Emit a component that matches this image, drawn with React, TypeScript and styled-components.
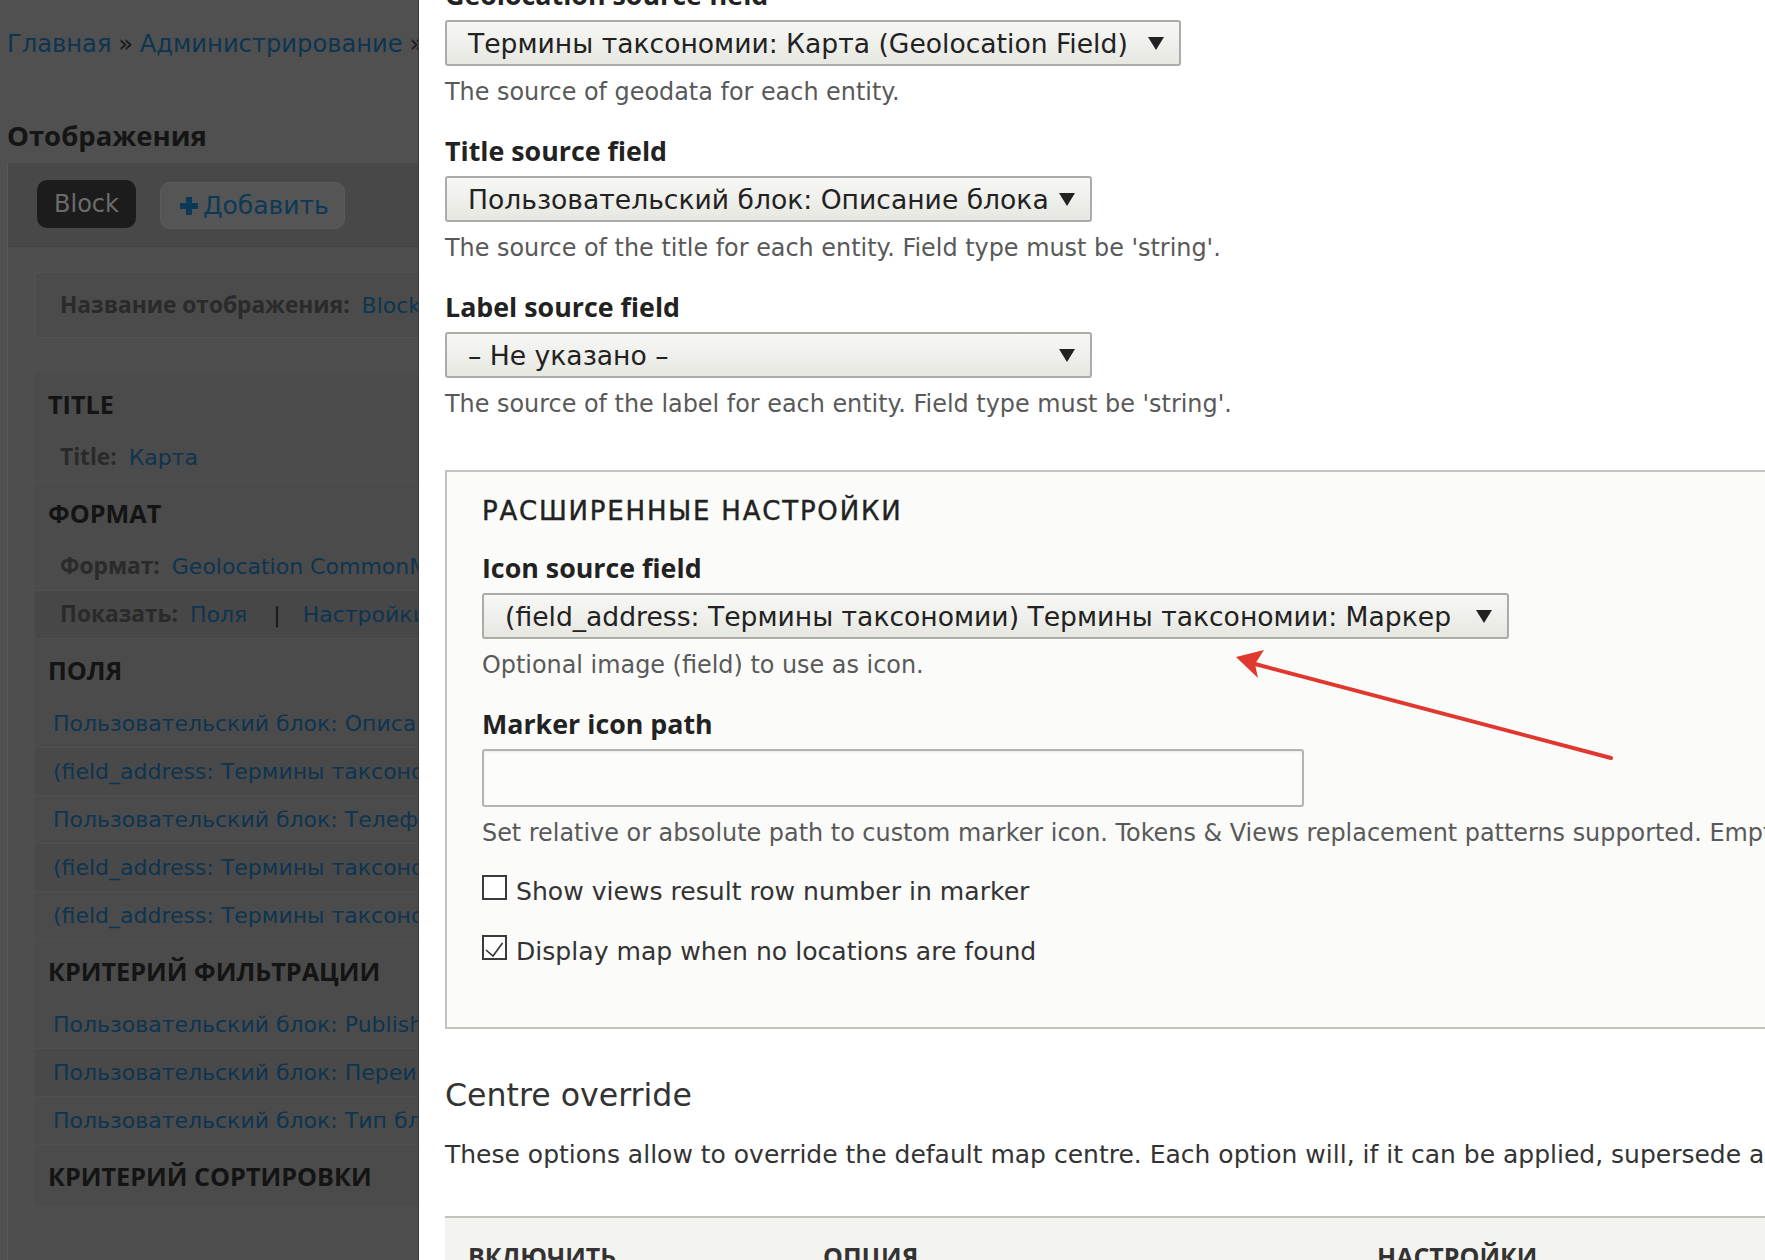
import React from "react";
import styled, { createGlobalStyle } from "styled-components";

const GlobalStyle = createGlobalStyle`
  html, body { margin: 0; padding: 0; }
  body {
    width: 1765px;
    height: 1260px;
    overflow: hidden;
    background: #a0a0a0;
    font-family: "DejaVu Sans", "Liberation Sans", sans-serif;
  }
  * { box-sizing: border-box; }
`;

const Viewport = styled.div`
  position: relative;
  width: 1765px;
  height: 1260px;
  overflow: hidden;
  background: #a0a0a0;
`;

/* ---------- admin page behind the modal ---------- */

const AdminPage = styled.div`
  padding: 28px 0 0 7px;
  white-space: nowrap;
`;

const Breadcrumb = styled.nav`
  font-size: 24.2px;
  line-height: 32px;
`;

const Crumb = styled.a`
  color: #1a6aa2;
  text-decoration: none;
`;

const CrumbSep = styled.span`
  color: #343434;
  margin: 0 0.28em;
`;

const PageTitle = styled.h1`
  margin: 59px 0 0;
  font: 700 27.5px/34px "Open Sans", sans-serif;
  color: #2a2a2a;
`;

const DisplayArea = styled.section`
  margin-top: 10px;
  width: 900px;
  height: 1200px;
  background: #9c9c9c;
  border-left: 1px solid #b4b4b4;
`;

const TabsBar = styled.div`
  display: flex;
  align-items: flex-start;
  gap: 24px;
  height: 84px;
  padding: 17px 0 0 29px;
  background: #909090;
  border-bottom: 1px solid #848484;
`;

const ActiveTab = styled.span`
  height: 48px;
  padding: 0 17px;
  border-radius: 10px;
  background: #383838;
  color: #d6d6d6;
  font-size: 24px;
  line-height: 48px;
`;

const AddTab = styled.span`
  display: flex;
  align-items: center;
  gap: 5px;
  margin-top: 2px;
  height: 47px;
  padding: 0 15px 0 19px;
  border-radius: 10px;
  border: 1px solid #b8b8b8;
  background: #aaaaaa;
  color: #1a72b0;
  font-size: 25px;
`;

const DisplayContent = styled.div`
  padding: 25px 0 0 27px;
`;

const NameBox = styled.div`
  width: 700px;
  height: 66px;
  padding-left: 24px;
  background: #969696;
  border: 1px solid #a4a4a4;
  line-height: 66px;
  font-size: 22px;
`;

const InlineLabel = styled.span`
  font: 700 22.7px "Open Sans", sans-serif;
  color: #545454;
  margin-right: 12px;
`;

const ValueLink = styled.a`
  color: #1a6aa2;
  text-decoration: none;
  font-size: 22px;
`;

const Pipe = styled.span`
  color: #2a2a2a;
  margin: 0 22px 0 26px;
  font-size: 22px;
`;

const ColumnBox = styled.div`
  width: 700px;
  margin-top: 35px;
  background: #969696;
`;

const SectionHeader = styled.div`
  height: 61px;
  padding-left: 13px;
  font: 700 25.2px/63px "Open Sans", sans-serif;
  color: #282828;
`;

const ItemRow = styled.div<{ $indent: number; $shade: "a" | "b" | "c" }>`
  height: 48px;
  padding-left: ${(p) => p.$indent}px;
  line-height: 47px;
  font-size: 22px;
  border-bottom: 1px solid #a0a0a0;
  background: ${(p) =>
    p.$shade === "a" ? "#969696" : p.$shade === "b" ? "#939393" : "#8e8e8e"};
`;

const Overlay = styled.div`
  position: absolute;
  inset: 0;
  background: rgba(0, 0, 0, 0.5);
`;

/* ---------- modal dialog ---------- */

const Dialog = styled.div`
  position: absolute;
  top: 0;
  left: 418px;
  right: 0;
  bottom: 0;
  background: #ffffff;
  border-left: 1px solid #3a3a3a;
  overflow: hidden;
`;

const DialogBody = styled.div`
  width: 1900px;
  margin-top: -21px;
  padding-left: 26px;
  white-space: nowrap;
`;

const FormItem = styled.div`
  margin-bottom: 27px;
`;

const FieldLabel = styled.label`
  display: block;
  margin-bottom: 9px;
  font: 700 26.8px/32px "Open Sans", sans-serif;
  color: #222222;
`;

const SelectBox = styled.div<{ $width: number }>`
  display: flex;
  align-items: center;
  justify-content: space-between;
  width: ${(p) => p.$width}px;
  height: 46px;
  padding: 0 15px 0 21px;
  border: 2px solid #ababa8;
  border-radius: 3px;
  background: linear-gradient(#f7f7f4, #e7e7e2);
  color: #222222;
  font-size: 26.6px;
`;

const Caret = styled.span`
  flex: none;
  width: 0;
  height: 0;
  border-left: 8px solid transparent;
  border-right: 8px solid transparent;
  border-top: 13px solid #222222;
`;

const TextInput = styled.div`
  width: 822px;
  height: 58px;
  border: 2px solid #b4b4b1;
  border-radius: 3px;
  background: #fcfcfa;
  box-shadow: inset 0 1px 2px rgba(0, 0, 0, 0.08);
`;

const Description = styled.div`
  margin-top: 10px;
  font-size: 23.9px;
  line-height: 32px;
  color: #595959;
`;

const Fieldset = styled.fieldset`
  margin: 50px 0 0;
  width: 1500px;
  padding: 23px 35px 31px;
  border: 2px solid #c3c3bf;
  background: #fbfbf9;
`;

const FieldsetTitle = styled.div`
  margin-bottom: 25px;
  font-size: 26px;
  line-height: 32px;
  letter-spacing: 1.8px;
  color: #222222;
  -webkit-text-stroke: 0.4px #222222;
`;

const CheckRow = styled.div`
  display: flex;
  align-items: flex-start;
  gap: 9px;
  margin-bottom: 28px;
  font-size: 25.1px;
  line-height: 32px;
  color: #333333;
`;

const CheckBox = styled.span`
  flex: none;
  width: 25px;
  height: 25px;
  margin-top: -1px;
  border: 2px solid #3a3a3a;
  background: #ffffff;
  display: flex;
`;

const SectionTitle = styled.h2`
  margin: 47px 0 0;
  font-size: 31.6px;
  line-height: 38px;
  font-weight: 400;
  color: #333333;
`;

const Paragraph = styled.p`
  margin: 25px 0 0;
  font-size: 25px;
  line-height: 32px;
  color: #333333;
`;

const TableHead = styled.div`
  display: grid;
  grid-template-columns: 355px 554px 1fr;
  width: 1500px;
  height: 80px;
  margin-top: 45px;
  border-top: 2px solid #c4c4bf;
  background: #f3f4ef;
`;

const HeadCell = styled.div`
  padding: 22px 0 0 23px;
  font: 700 25px/32px "Open Sans", sans-serif;
  color: #333333;
  text-transform: uppercase;
`;

const Annotation = styled.svg`
  position: absolute;
  left: 780px;
  top: 620px;
`;

const PlusIcon = () => (
  <svg width="18" height="18" viewBox="0 0 18 18">
    <path d="M6 0h6v6h6v6h-6v6H6v-6H0V6h6z" fill="#1a72b0" />
  </svg>
);

const CheckMark = () => (
  <svg width="21" height="21" viewBox="0 0 21 21">
    <polyline
      points="2,13 9,19 18.5,6"
      fill="none"
      stroke="#333"
      strokeWidth="1.6"
    />
  </svg>
);

function Select({ width, value }: { width: number; value: string }) {
  return (
    <SelectBox $width={width}>
      <span>{value}</span>
      <Caret />
    </SelectBox>
  );
}

export default function App() {
  const fieldRows = [
    "Пользовательский блок: Описание блока",
    "(field_address: Термины таксономии) Термины таксономии: Адрес",
    "Пользовательский блок: Телефон",
    "(field_address: Термины таксономии) Термины таксономии: Карта",
    "(field_address: Термины таксономии) Термины таксономии: Маркер",
  ];
  const filterRows = [
    "Пользовательский блок: Published (= Да)",
    "Пользовательский блок: Переиспользуемый (= Да)",
    "Пользовательский блок: Тип блока (= Карта)",
  ];

  return (
    <Viewport>
      <GlobalStyle />
      <AdminPage>
        <Breadcrumb>
          <Crumb>Главная</Crumb>
          <CrumbSep>»</CrumbSep>
          <Crumb>Администрирование</Crumb>
          <CrumbSep>»</CrumbSep>
          <Crumb>Структура</Crumb>
        </Breadcrumb>
        <PageTitle>Отображения</PageTitle>
        <DisplayArea>
          <TabsBar>
            <ActiveTab>Block</ActiveTab>
            <AddTab>
              <PlusIcon />
              Добавить
            </AddTab>
          </TabsBar>
          <DisplayContent>
            <NameBox>
              <InlineLabel>Название отображения:</InlineLabel>
              <ValueLink>Block</ValueLink>
            </NameBox>
            <ColumnBox>
              <SectionHeader>TITLE</SectionHeader>
              <ItemRow $indent={25} $shade="a">
                <InlineLabel>Title:</InlineLabel>
                <ValueLink>Карта</ValueLink>
              </ItemRow>
              <SectionHeader>ФОРМАТ</SectionHeader>
              <ItemRow $indent={25} $shade="a">
                <InlineLabel>Формат:</InlineLabel>
                <ValueLink>Geolocation CommonMap</ValueLink>
              </ItemRow>
              <ItemRow $indent={25} $shade="c">
                <InlineLabel>Показать:</InlineLabel>
                <ValueLink>Поля</ValueLink>
                <Pipe>|</Pipe>
                <ValueLink>Настройки</ValueLink>
              </ItemRow>
              <SectionHeader>ПОЛЯ</SectionHeader>
              {fieldRows.map((r, i) => (
                <ItemRow key={r + i} $indent={18} $shade={i % 2 ? "b" : "a"}>
                  <ValueLink>{r}</ValueLink>
                </ItemRow>
              ))}
              <SectionHeader>КРИТЕРИЙ ФИЛЬТРАЦИИ</SectionHeader>
              {filterRows.map((r, i) => (
                <ItemRow key={r} $indent={18} $shade={i % 2 ? "b" : "a"}>
                  <ValueLink>{r}</ValueLink>
                </ItemRow>
              ))}
              <SectionHeader>КРИТЕРИЙ СОРТИРОВКИ</SectionHeader>
            </ColumnBox>
          </DisplayContent>
        </DisplayArea>
      </AdminPage>

      <Overlay />

      <Dialog>
        <DialogBody>
          <FormItem>
            <FieldLabel>Geolocation source field</FieldLabel>
            <Select width={736} value="Термины таксономии: Карта (Geolocation Field)" />
            <Description>The source of geodata for each entity.</Description>
          </FormItem>
          <FormItem>
            <FieldLabel>Title source field</FieldLabel>
            <Select width={647} value="Пользовательский блок: Описание блока" />
            <Description>
              The source of the title for each entity. Field type must be 'string'.
            </Description>
          </FormItem>
          <FormItem>
            <FieldLabel>Label source field</FieldLabel>
            <Select width={647} value="– Не указано –" />
            <Description>
              The source of the label for each entity. Field type must be 'string'.
            </Description>
          </FormItem>

          <Fieldset>
            <FieldsetTitle>РАСШИРЕННЫЕ НАСТРОЙКИ</FieldsetTitle>
            <FormItem>
              <FieldLabel>Icon source field</FieldLabel>
              <Select
                width={1027}
                value="(field_address: Термины таксономии) Термины таксономии: Маркер"
              />
              <Description>Optional image (field) to use as icon.</Description>
            </FormItem>
            <FormItem>
              <FieldLabel>Marker icon path</FieldLabel>
              <TextInput />
              <Description>
                Set relative or absolute path to custom marker icon. Tokens &amp; Views
                replacement patterns supported. Empty for default.
              </Description>
            </FormItem>
            <CheckRow>
              <CheckBox />
              Show views result row number in marker
            </CheckRow>
            <CheckRow>
              <CheckBox>
                <CheckMark />
              </CheckBox>
              Display map when no locations are found
            </CheckRow>
          </Fieldset>

          <SectionTitle>Centre override</SectionTitle>
          <Paragraph>
            These options allow to override the default map centre. Each option will, if
            it can be applied, supersede any following option.
          </Paragraph>
          <TableHead>
            <HeadCell>Включить</HeadCell>
            <HeadCell>Опция</HeadCell>
            <HeadCell>Настройки</HeadCell>
          </TableHead>
        </DialogBody>

        <Annotation width="440" height="160" viewBox="780 620 440 160">
          <line x1="1192" y1="758" x2="836" y2="664" stroke="#e0382e" strokeWidth="4" strokeLinecap="round" />
          <polygon points="817,657 845,650 836,664 839,678" fill="#e0382e" />
        </Annotation>
      </Dialog>
    </Viewport>
  );
}
